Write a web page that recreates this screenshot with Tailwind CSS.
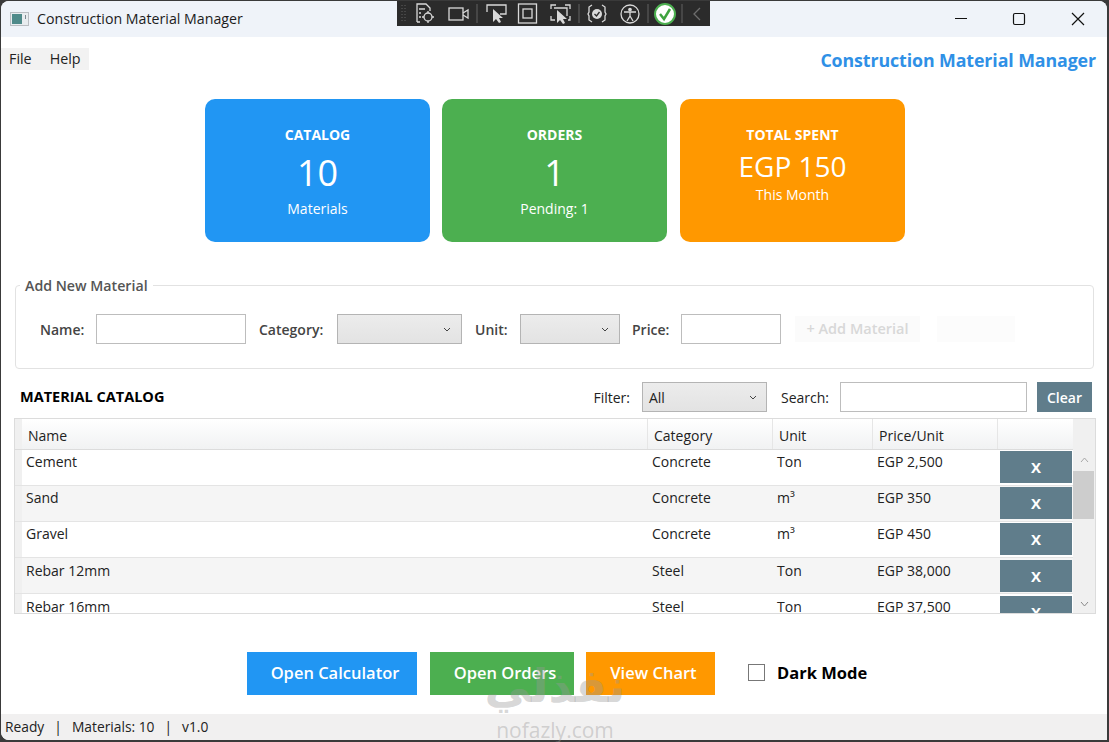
<!DOCTYPE html>
<html lang="en">
<head>
  <meta charset="UTF-8">
  <meta name="viewport" content="width=device-width, initial-scale=1.0">
  <title>Construction Material Manager</title>
  <script src="https://cdn.jsdelivr.net/npm/@tailwindcss/browser@4"></script>
</head>
<body class="bg-[#3a3a3a] font-['Open_Sans','Noto_Sans',sans-serif] text-[#222]">
<div class="relative h-[742px] w-[1109px] overflow-hidden bg-[#3a3a3a]">
  <div class="mx-px mt-px flex h-[739px] w-[1106px] flex-col overflow-hidden rounded-t-lg rounded-bl-lg bg-white">

    <!-- title bar -->
    <div class="flex h-[36px] shrink-0 items-center bg-[#eff3f9] pl-[9px]">
      <svg class="h-[14px] w-[19px]" viewBox="0 0 19 14">
        <rect x="0.5" y="0.5" width="18" height="13" fill="#e8ecef" stroke="#b9bdc2"/>
        <rect x="2" y="2" width="10" height="10" fill="#4e8a8a"/>
        <rect x="15" y="3" width="1" height="4" fill="#7d8790"/>
      </svg>
      <span class="ml-[8px] text-[14.2px] text-[#1c1c1c]">Construction Material Manager</span>
      <div class="ml-auto flex items-center">
        <svg class="h-[36px] w-[58px]" viewBox="0 0 58 36"><path d="M11 17.500h12" stroke="#111" stroke-width="1.2" fill="none"/></svg>
        <svg class="h-[36px] w-[58px]" viewBox="0 0 58 36"><rect x="11.500" y="12.500" width="11" height="11" rx="1.5" stroke="#111" stroke-width="1.2" fill="none"/></svg>
        <svg class="h-[36px] w-[47px]" viewBox="0 0 47 36"><path d="M12 12l12 12M24 12l-12 12" stroke="#111" stroke-width="1.2" fill="none"/></svg>
      </div>
    </div>

    <!-- menu + app title -->
    <div class="flex h-[62px] shrink-0 items-start justify-between pr-[11px]">
      <div class="mt-[11px] flex h-[22px] w-[88px] items-center gap-[18px] bg-[#f2f2f2] pl-[8px] text-[14.3px] text-[#222]">
        <span>File</span><span>Help</span>
      </div>
      <div class="mt-[11px] text-[17.8px] font-bold leading-[24px] tracking-[-0.1px] text-[#2f90e6]">Construction Material Manager</div>
    </div>

    <!-- stat cards -->
    <div class="flex h-[143px] shrink-0 pl-[204px] text-center text-white">
      <div class="flex w-[225px] flex-col items-center rounded-[10px] bg-[#2196f3] pt-[26px]">
        <div class="text-[14px] font-bold leading-[20px]">CATALOG</div>
        <div class="mt-[6px] text-[36px] leading-[44px]">10</div>
        <div class="mt-[4px] text-[14px] leading-[20px]">Materials</div>
      </div>
      <div class="ml-[12px] flex w-[225px] flex-col items-center rounded-[10px] bg-[#4caf50] pt-[26px]">
        <div class="text-[14px] font-bold leading-[20px]">ORDERS</div>
        <div class="mt-[6px] text-[36px] leading-[44px]">1</div>
        <div class="mt-[4px] text-[14px] leading-[20px]">Pending: 1</div>
      </div>
      <div class="ml-[13px] flex w-[225px] flex-col items-center rounded-[10px] bg-[#ff9800] pt-[26px]">
        <div class="text-[14px] font-bold leading-[20px]">TOTAL SPENT</div>
        <div class="mt-[3px] text-[28px] leading-[36px]">EGP 150</div>
        <div class="mt-[1px] text-[14px] leading-[20px]">This Month</div>
      </div>
    </div>

    <!-- add material group -->
    <div class="relative mt-[43px] ml-[14px] flex h-[84px] w-[1079px] shrink-0 items-center rounded-[4px] border border-[#e2e2e2] pt-[4px] pl-[24px] text-[14px] font-semibold text-[#444]">
      <div class="absolute -top-[10px] left-[4px] bg-white px-[5px] text-[14.2px] leading-[19px] text-[#555]">Add New Material</div>
      <span class="w-[56px]">Name:</span>
      <div class="h-[30px] w-[150px] border border-[#bdbdbd] bg-white"></div>
      <span class="ml-[13px] w-[78px]">Category:</span>
      <div class="flex h-[30px] w-[125px] items-center justify-end border border-[#b4b4b4] bg-gradient-to-b from-[#ececec] to-[#e3e3e3] pr-[10px]">
        <svg class="h-[5px] w-[8px]" viewBox="0 0 8 5"><path d="M1 1l3 3 3-3" stroke="#444" fill="none"/></svg>
      </div>
      <span class="ml-[13px] w-[45px]">Unit:</span>
      <div class="flex h-[30px] w-[100px] items-center justify-end border border-[#b4b4b4] bg-gradient-to-b from-[#ececec] to-[#e3e3e3] pr-[10px]">
        <svg class="h-[5px] w-[8px]" viewBox="0 0 8 5"><path d="M1 1l3 3 3-3" stroke="#444" fill="none"/></svg>
      </div>
      <span class="ml-[12px] w-[49px]">Price:</span>
      <div class="h-[30px] w-[100px] border border-[#bdbdbd] bg-white"></div>
      <div class="ml-[14px] flex h-[26px] w-[125px] items-center justify-center bg-[#fbfbfb] text-[14.5px] text-[#d8d8d8]">+ Add Material</div>
      <div class="ml-[17px] h-[26px] w-[78px] bg-[#fcfcfc]"></div>
    </div>

    <!-- catalog toolbar -->
    <div class="mt-[13px] flex h-[30px] shrink-0 items-center pr-[15px] pl-[19px] text-[14px]">
      <span class="text-[14.5px] font-bold text-black">MATERIAL CATALOG</span>
      <span class="ml-auto">Filter:</span>
      <div class="ml-[12px] flex h-[30px] w-[125px] items-center justify-between border border-[#b4b4b4] bg-gradient-to-b from-[#ececec] to-[#e3e3e3] pr-[9px] pl-[6px]">
        <span>All</span>
        <svg class="h-[5px] w-[8px]" viewBox="0 0 8 5"><path d="M1 1l3 3 3-3" stroke="#444" fill="none"/></svg>
      </div>
      <span class="ml-[14px]">Search:</span>
      <div class="ml-[11px] h-[30px] w-[187px] border border-[#bdbdbd] bg-white"></div>
      <div class="ml-[10px] flex h-[30px] w-[55px] items-center justify-center bg-[#607d8b] font-semibold text-white">Clear</div>
    </div>

    <!-- material table -->
    <div class="mt-[6px] ml-[13px] flex h-[196px] w-[1082px] shrink-0 overflow-hidden border border-[#dcdcdc] text-[14px] text-[#222]">
      <div class="flex w-[7px] shrink-0 flex-col bg-[#f0f0f0]">
        <div class="h-[31px] shrink-0 border-b border-[#dcdcdc]"></div>
        <div class="h-[36px] shrink-0 border-b border-[#e4e4e4]"></div>
        <div class="h-[36px] shrink-0 border-b border-[#e4e4e4]"></div>
        <div class="h-[36px] shrink-0 border-b border-[#e4e4e4]"></div>
        <div class="h-[36px] shrink-0 border-b border-[#e4e4e4]"></div>
      </div>
      <div class="w-[1051px] shrink-0">
        <div class="grid h-[31px] grid-cols-[626px_125px_100px_125px_75px] border-b border-[#dcdcdc] bg-gradient-to-b from-white to-[#f1f2f3]">
          <div class="flex items-center border-r border-[#e6e6e6] pt-[2px] pl-[6px]">Name</div>
          <div class="flex items-center border-r border-[#e6e6e6] pt-[2px] pl-[6px]">Category</div>
          <div class="flex items-center border-r border-[#e6e6e6] pt-[2px] pl-[6px]">Unit</div>
          <div class="flex items-center border-r border-[#e6e6e6] pt-[2px] pl-[6px]">Price/Unit</div>
          <div></div>
        </div>
        <div class="grid h-[36px] grid-cols-[626px_125px_100px_125px_75px] border-b border-[#e4e4e4] bg-white">
          <div class="pt-[1px] pl-[4px]">Cement</div><div class="pt-[1px] pl-[4px]">Concrete</div><div class="pt-[1px] pl-[4px]">Ton</div><div class="pt-[1px] pl-[4px]">EGP 2,500</div>
          <div class="pt-[1px] pl-[2px]"><div class="flex h-[32px] w-[72px] items-center justify-center bg-[#607d8b] text-[15px] font-bold text-white">X</div></div>
        </div>
        <div class="grid h-[36px] grid-cols-[626px_125px_100px_125px_75px] border-b border-[#e4e4e4] bg-[#f5f5f5]">
          <div class="pt-[1px] pl-[4px]">Sand</div><div class="pt-[1px] pl-[4px]">Concrete</div><div class="pt-[1px] pl-[4px]">m³</div><div class="pt-[1px] pl-[4px]">EGP 350</div>
          <div class="pt-[1px] pl-[2px]"><div class="flex h-[32px] w-[72px] items-center justify-center bg-[#607d8b] text-[15px] font-bold text-white">X</div></div>
        </div>
        <div class="grid h-[36px] grid-cols-[626px_125px_100px_125px_75px] border-b border-[#e4e4e4] bg-white">
          <div class="pt-[1px] pl-[4px]">Gravel</div><div class="pt-[1px] pl-[4px]">Concrete</div><div class="pt-[1px] pl-[4px]">m³</div><div class="pt-[1px] pl-[4px]">EGP 450</div>
          <div class="pt-[1px] pl-[2px]"><div class="flex h-[32px] w-[72px] items-center justify-center bg-[#607d8b] text-[15px] font-bold text-white">X</div></div>
        </div>
        <div class="grid h-[36px] grid-cols-[626px_125px_100px_125px_75px] border-b border-[#e4e4e4] bg-[#f5f5f5]">
          <div class="pt-[2px] pl-[4px]">Rebar 12mm</div><div class="pt-[2px] pl-[4px]">Steel</div><div class="pt-[2px] pl-[4px]">Ton</div><div class="pt-[2px] pl-[4px]">EGP 38,000</div>
          <div class="pt-[2px] pl-[2px]"><div class="flex h-[32px] w-[72px] items-center justify-center bg-[#607d8b] text-[15px] font-bold text-white">X</div></div>
        </div>
        <div class="grid h-[36px] grid-cols-[626px_125px_100px_125px_75px] bg-white">
          <div class="pt-[2px] pl-[4px]">Rebar 16mm</div><div class="pt-[2px] pl-[4px]">Steel</div><div class="pt-[2px] pl-[4px]">Ton</div><div class="pt-[2px] pl-[4px]">EGP 37,500</div>
          <div class="pt-[2px] pl-[2px]"><div class="flex h-[32px] w-[72px] items-center justify-center bg-[#607d8b] text-[15px] font-bold text-white">X</div></div>
        </div>
      </div>
      <!-- scrollbar -->
      <div class="flex flex-1 flex-col bg-[#f0f0f0]">
        <div class="flex h-[52px] shrink-0 items-end justify-center pb-[8px]">
          <svg class="h-[6px] w-[9px]" viewBox="0 0 9 6"><path d="M1 5l3.5-4 3.5 4" stroke="#a8a8a8" fill="none"/></svg>
        </div>
        <div class="h-[48px] w-[21px] shrink-0 bg-[#cdcdcd]"></div>
        <div class="flex flex-1 items-end justify-center pb-[6px]">
          <svg class="h-[6px] w-[9px]" viewBox="0 0 9 6"><path d="M1 1l3.5 4 3.5-4" stroke="#8a8a8a" fill="none"/></svg>
        </div>
      </div>
    </div>

    <!-- action buttons -->
    <div class="mt-[38px] flex h-[43px] shrink-0 items-center pl-[246px] text-[16.5px] font-semibold text-white">
      <div class="flex h-[43px] w-[170px] items-center justify-center bg-[#2196f3] pl-[6px]">Open Calculator</div>
      <div class="ml-[13px] flex h-[43px] w-[144px] items-center justify-center bg-[#4caf50] pl-[6px]">Open Orders</div>
      <div class="ml-[12px] flex h-[43px] w-[129px] items-center justify-center bg-[#ff9800] pl-[6px]">View Chart</div>
      <div class="mb-[2px] ml-[33px] h-[17px] w-[17px] border border-[#777] bg-white"></div>
      <span class="ml-[12px] font-bold text-black">Dark Mode</span>
    </div>

    <!-- status bar -->
    <div class="mt-[19px] flex h-[26px] shrink-0 items-center gap-[10px] bg-[#f1f0f0] pl-[4px] text-[13.8px] text-[#222]">
      <span>Ready</span><span>|</span><span>Materials: 10</span><span>|</span><span>v1.0</span>
    </div>
  </div>

  <!-- capture toolbar over the title bar -->
  <div class="absolute top-px left-[397px] flex h-[25px] w-[313px] items-center bg-[#2b2b2b]">
    <svg class="h-[25px] w-[313px]" viewBox="0 0 313 25" fill="none" stroke="#d9d9d9" stroke-width="1.3">
      <path d="M5 4v17M8 4v17" stroke="#555" stroke-dasharray="1 2"/>
      <path d="M20 12V3h9l4 4v3M20 21h3M22 8h6M22 12h2M22 16h2M20 12v9"/>
      <circle cx="31" cy="16" r="4"/><path d="M31 10v2M31 20v2M25 16h2M35 16h2"/>
      <rect x="52" y="7" width="14" height="12"/><path d="M66 12l5-3v8l-5-3"/>
      <path d="M80 3v19" stroke="#555"/>
      <path d="M90 11V4h19v9h-6"/><path d="M96 8v13l3-3 3 4 2-1-2-4h4z" fill="#d9d9d9" stroke="none"/>
      <rect x="121.500" y="3" width="18" height="19"/><rect x="126" y="8" width="9" height="9"/>
      <path d="M154 8V4h5M168 4h5v4M154 15v4h4M173 15v4h-2"/><path d="M157 7h13v8"/><path d="M160 9v13l3-3 3 4 2-1-2-4h4z" fill="#d9d9d9" stroke="none"/>
      <path d="M182 3v19" stroke="#555"/>
      <path d="M195 4l-3 2v5l-1 2 1 2v4l3 2M205 4l3 2v5l1 2-1 2v4l-3 2"/><circle cx="200" cy="13" r="5" fill="#d9d9d9" stroke="none"/><path d="M197.500 13l2 2 3-4" stroke="#2b2b2b"/>
      <circle cx="233" cy="13" r="9"/><circle cx="233" cy="8.500" r="1.200" fill="#d9d9d9"/><path d="M227 11h12M233 11v4l-3 5M233 15l3 5"/>
      <path d="M251 3v19" stroke="#555"/>
      <circle cx="268" cy="13" r="10" fill="#fff" stroke="#4caf50" stroke-width="2"/><path d="M263 13l4 5 6-10" stroke="#3fa33f" stroke-width="2.500"/>
      <path d="M285 3v19" stroke="#555"/>
      <path d="M303 7l-6 6 6 6" stroke="#6e6e6e"/>
    </svg>
  </div>

  <!-- watermark -->
  <div class="pointer-events-none absolute top-[656px] left-[475px] w-[160px] text-center text-[#999]/40">
    <div dir="rtl" class="font-['DejaVu_Sans',sans-serif] text-[46px] leading-[60px] font-bold">نفذلي</div>
    <div class="text-[21px] leading-[28px]">nofazly.com</div>
  </div>
</div>
</body>
</html>
